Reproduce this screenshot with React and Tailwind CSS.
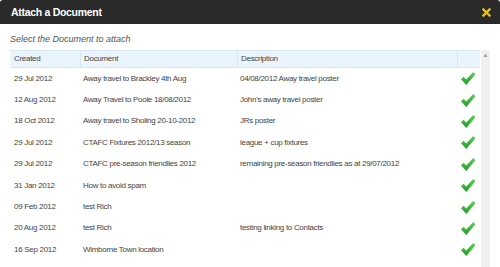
import React from 'react';

const docs = [
  { created: '29 Jul 2012', name: 'Away travel to Brackley 4th Aug', desc: '04/08/2012 Away travel poster' },
  { created: '12 Aug 2012', name: 'Away Travel to Poole 18/08/2012', desc: "John's away travel poster" },
  { created: '18 Oct 2012', name: 'Away travel to Sholing 20-10-2012', desc: 'JRs poster' },
  { created: '29 Jul 2012', name: 'CTAFC Fixtures 2012/13 season', desc: 'league + cup fixtures' },
  { created: '29 Jul 2012', name: 'CTAFC pre-season friendlies 2012', desc: 'remaining pre-season friendlies as at 29/07/2012' },
  { created: '31 Jan 2012', name: 'How to avoid spam', desc: '' },
  { created: '09 Feb 2012', name: 'test Rich', desc: '' },
  { created: '20 Aug 2012', name: 'test Rich', desc: 'testing linking to Contacts' },
  { created: '16 Sep 2012', name: 'Wimborne Town location', desc: '' },
];

const Tick = () => (
  <svg width="16" height="15" viewBox="0 0 16 15" className="block">
    <defs>
      <linearGradient id="tickGrad" x1="0" y1="0" x2="0" y2="1">
        <stop offset="0" stopColor="#5fd35a" />
        <stop offset="1" stopColor="#1f9a27" />
      </linearGradient>
    </defs>
    <path d="M1 8.2 L3.6 5.8 L6.2 8.6 L13.2 1 L15.4 3.2 L6.3 14 Z" fill="url(#tickGrad)" />
  </svg>
);

const CloseIcon = () => (
  <svg width="9" height="9" viewBox="0 0 9 9" className="block">
    <path d="M1.5 1.5 L7.5 7.5 M7.5 1.5 L1.5 7.5" stroke="#f2c200" strokeWidth="2.4" strokeLinecap="square" />
  </svg>
);

export default function App() {
  return (
    <div className="w-[500px] h-[267px] bg-white overflow-hidden font-['Liberation_Sans',Arial,sans-serif]">
      {/* Header */}
      <div className="h-[24px] bg-[#2a2a2a] rounded-t-[3px] flex items-center justify-between pl-[11px] pr-[9px]">
        <span className="text-white font-bold text-[10.5px] tracking-[-0.3px] leading-none">Attach a Document</span>
        <CloseIcon />
      </div>

      <div className="pl-[10px] pt-[9px]">
        <p className="italic text-[#555] text-[9px] leading-[12px] mb-[5px]">Select the Document to attach</p>

        <div className="flex">
          <div className="w-[470px] text-[8px] tracking-[-0.3px] text-[#444]">
            {/* Column headings */}
            <div className="flex h-[18px] bg-[#eaf4fd] border-y border-[#d7e6f3] items-center">
              <div className="w-[70px] pl-[4px]">Created</div>
              <div className="w-[157px] h-full flex items-center border-l border-[#d7e6f3] pl-[3px]">Document</div>
              <div className="w-[220px] h-full flex items-center border-l border-[#d7e6f3] pl-[3px]">Description</div>
              <div className="w-[23px] h-full border-l border-[#d7e6f3]"></div>
            </div>

            {docs.map((d, i) => (
              <div key={i} className="flex h-[21.4px] items-center whitespace-nowrap">
                <div className="w-[70px] pl-[4px]">{d.created}</div>
                <div className="w-[157px] pl-[3px]">{d.name}</div>
                <div className="w-[220px] pl-[3px]">{d.desc}</div>
                <div className="w-[23px] pl-[3px]">
                  <Tick />
                </div>
              </div>
            ))}
          </div>

          {/* Scrollbar */}
          <div className="w-[9px] ml-[1px] bg-[#f0f0f0] h-[230px] flex flex-col items-center pt-[2px]">
            <span className="text-[6px] leading-[6px] text-[#999]">▲</span>
          </div>
        </div>
      </div>
    </div>
  );
}
